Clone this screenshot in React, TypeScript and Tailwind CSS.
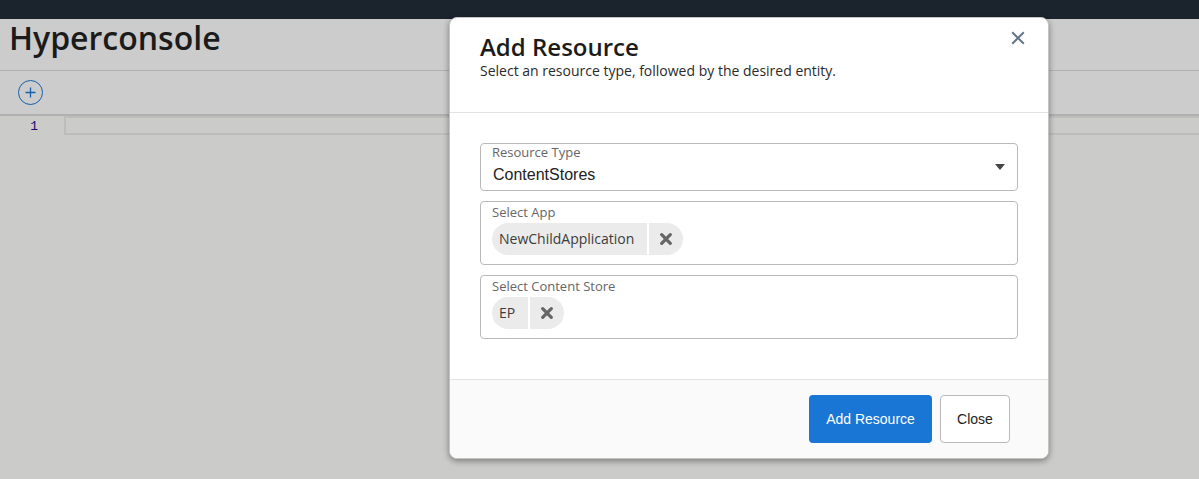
import type { ReactNode } from 'react';

function Chip({ label }: { label: string }) {
  return (
    <div className="flex h-8 w-fit gap-0.5 text-[14px] text-[#3c3c3c]">
      <span className="flex items-center rounded-l-full bg-[#ebebeb] pb-[2px] pl-[7px] pr-[13px]">{label}</span>
      <button aria-label={`Remove ${label}`} className="flex w-[34px] items-center justify-center rounded-r-full bg-[#ebebeb]">
        <svg width="12" height="12" viewBox="0 0 12 12" fill="none" stroke="#666" strokeWidth="3.2" strokeLinecap="round">
          <path d="M1.7 1.7 10.3 10.3M10.3 1.7 1.7 10.3" />
        </svg>
      </button>
    </div>
  );
}

function Field({ label, children }: { label: string; children: ReactNode }) {
  return (
    <div className="h-16 rounded-[4px] border border-[#b9b9b9] bg-white px-[11px]">
      <div className="mt-px h-5 text-[13px] leading-[19px] text-[#666]">{label}</div>
      {children}
    </div>
  );
}

function Dialog() {
  return (
    <section className="absolute left-[449px] top-[17px] flex h-[442px] w-[600px] flex-col overflow-hidden rounded-[8px] border border-[#c4c4c4] bg-white shadow-[0_2px_6px_rgba(0,0,0,0.4)]">
      <header className="flex h-[95px] shrink-0 justify-between border-b border-[#e2e2e2] pl-[30px] pr-[23px]">
        <div>
          <h2 className="mt-[13px] text-[24px] font-semibold leading-[32px] text-[#1b1b1b]">Add Resource</h2>
          <p className="mt-px text-[14px] leading-[14px] text-[#2a2a2a]">Select an resource type, followed by the desired entity.</p>
        </div>
        <button aria-label="Close dialog" className="mt-[13px] flex h-[14px] w-[14px] items-center justify-center">
          <svg width="14" height="14" viewBox="0 0 14 14" fill="none" stroke="#657789" strokeWidth="2">
            <path d="M1.2 1.2 12.8 12.8M12.8 1.2 1.2 12.8" />
          </svg>
        </button>
      </header>
      <div className="flex flex-1 flex-col gap-[10px] px-[30px] pt-[30px]">
        <div className="flex h-12 items-center justify-between rounded-[4px] border border-[#b9b9b9] pl-[11px] pr-3">
          <div className="h-full">
            <div className="text-[13px] leading-[16px] text-[#666]">Resource Type</div>
            <div className="pl-px pt-[3px] font-['Liberation_Sans',sans-serif] text-[16px] leading-[24px] text-[#222]">ContentStores</div>
          </div>
          <svg width="10" height="6" viewBox="0 0 10 6" fill="#444"><path d="M0 0h10L5 6z" /></svg>
        </div>
        <Field label="Select App"><Chip label="NewChildApplication" /></Field>
        <Field label="Select Content Store"><Chip label="EP" /></Field>
      </div>
      <footer className="flex h-[79px] shrink-0 justify-end gap-2 border-t border-[#e2e2e2] bg-[#fafafa] pr-[38px] pt-[15px] font-['Liberation_Sans',sans-serif] text-[14px]">
        <button className="h-12 w-[123px] rounded-[4px] bg-[#1976d5] font-normal text-white">Add Resource</button>
        <button className="h-12 w-[70px] rounded-[4px] border border-[#b9b9b9] bg-white text-[#222]">Close</button>
      </footer>
    </section>
  );
}

export default function App() {
  return (
    <div className="relative flex h-[479px] w-full flex-col overflow-hidden bg-[#cbcbc9] font-['Open_Sans',sans-serif]">
      <div className="h-[19px] shrink-0 bg-[#1b232d]" />
      <header className="h-[52px] shrink-0 border-b border-[#b0b0b0] bg-[#cccccc] pl-[9px]">
        <h1 className="text-[32px] font-semibold leading-[38px] text-[#1b1b1b]">Hyperconsole</h1>
      </header>
      <div className="flex h-[45px] shrink-0 items-center border-b-2 border-[#b0b0b0] bg-[#cccccc] pl-[18px]">
        <button aria-label="Add" className="flex h-[25px] w-[25px]">
          <svg width="25" height="25" viewBox="0 0 25 25" fill="none" stroke="#155fac">
            <circle cx="12.5" cy="12.5" r="12" />
            <path d="M12.5 7.5v10M7.5 12.5h10" strokeWidth="1.3" />
          </svg>
        </button>
      </div>
      <main className="flex flex-1">
        <div className="w-16 pr-[26px] pt-[2px] text-right font-['Liberation_Mono',monospace] text-[13px] leading-[18px] text-[#200a6e]">1</div>
        <div className="h-[19px] flex-1 border-y-2 border-l-2 border-[#bdbdbc]" />
      </main>
      <Dialog />
    </div>
  );
}
